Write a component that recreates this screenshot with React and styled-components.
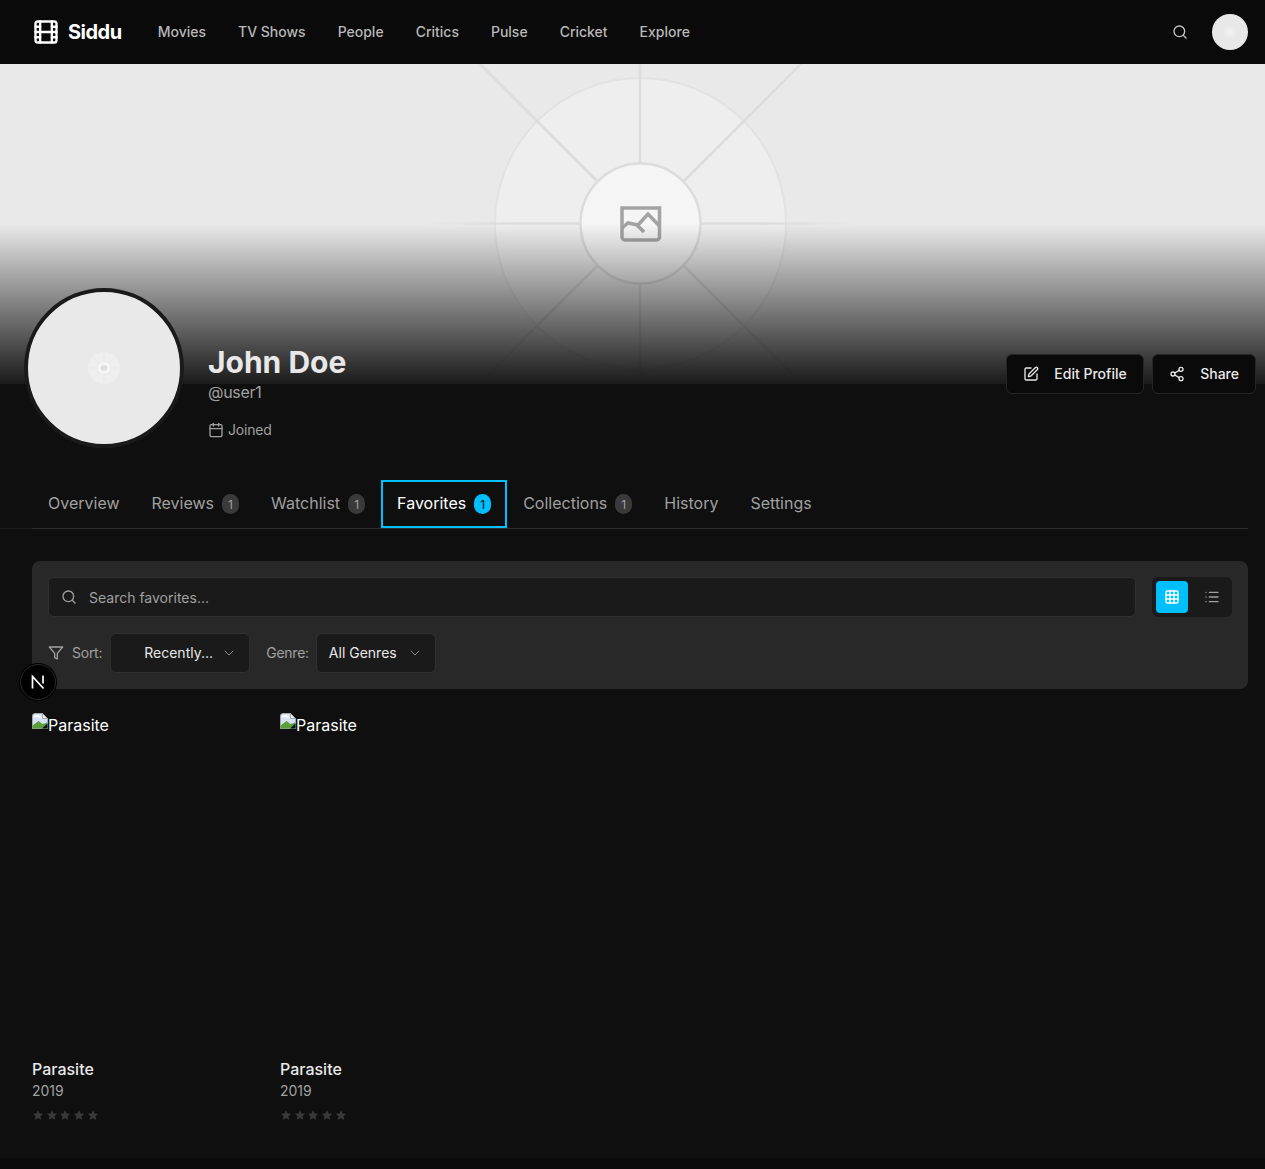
import React from 'react';
import styled, { createGlobalStyle } from 'styled-components';
import { Film, Search, SquarePen, Share2, Calendar, ChevronDown, Grid3x3, List } from 'lucide-react';

const GlobalStyle = createGlobalStyle`
  html, body {
    margin: 0;
    height: 1169px;
    overflow: hidden;
    background: #0f0f0f;
    color: #fff;
    font-family: Inter, "Liberation Sans", sans-serif;
  }
  * { box-sizing: border-box; }
`;

const Page = styled.div`
  min-height: 1169px;
  display: flex;
  flex-direction: column;
`;

const Nav = styled.nav`
  height: 64px;
  padding: 0 17px 0 32px;
  display: flex;
  align-items: center;
  background: #0a0a0a;
`;

const Logo = styled.div`
  display: flex;
  align-items: center;
  gap: 8px;
  margin-right: 36px;
  font-size: 20px;
  font-weight: 700;
  letter-spacing: -0.5px;
  color: #fff;
`;

const NavLinks = styled.div`
  display: flex;
  gap: 32px;
  flex: 1;
  margin-bottom: 2px;
`;

const NavLink = styled.a`
  font-size: 14px;
  font-weight: 500;
  color: #b8b8b8;
`;

const NavSearch = styled.div`
  display: flex;
  color: #c4c4c4;
  margin-right: 24px;
`;

const NavAvatar = styled.div`
  width: 36px;
  height: 36px;
  border-radius: 50%;
  background: radial-gradient(circle, #f2f2f2 0, #e8e8e8 30%);
`;

const Hero = styled.div`
  position: relative;
  height: 320px;
  background: #e9e9e9;
  overflow: hidden;
`;

const HeroArt = styled.svg`
  display: block;
  width: 1265px;
  height: 320px;
`;

const HeroFade = styled.div`
  position: absolute;
  inset: 0;
  background: linear-gradient(to top, rgba(15, 15, 15, 0.95) 0, rgba(15, 15, 15, 0) 50%);
`;

const ProfileHeader = styled.div`
  position: relative;
  margin-top: -96px;
  padding: 0 9px 0 24px;
  display: flex;
  align-items: flex-start;
`;

const AvatarRing = styled.div`
  width: 160px;
  height: 160px;
  border-radius: 50%;
  border: 4px solid #1a1a1a;
  background: #e9e9e9;
  overflow: hidden;
  flex: none;
`;

const AvatarArt = styled.svg`
  display: block;
  width: 152px;
  height: 152px;
`;

const ProfileInfo = styled.div`
  margin-left: 24px;
  padding-top: 56px;
  flex: 1;
`;

const Name = styled.h1`
  margin: 0;
  font-size: 30px;
  line-height: 36px;
  font-weight: 700;
  color: #e8e8e8;
`;

const Handle = styled.div`
  font-size: 16px;
  line-height: 24px;
  letter-spacing: -0.3px;
  color: #a0a0a0;
`;

const Joined = styled.div`
  margin-top: 16px;
  display: flex;
  align-items: center;
  gap: 4px;
  font-size: 14px;
  line-height: 20px;
  letter-spacing: -0.2px;
  color: #a0a0a0;
`;

const Actions = styled.div`
  display: flex;
  gap: 8px;
  padding-top: 66px;
`;

const ActionButton = styled.button`
  height: 40px;
  padding: 0 16px;
  display: flex;
  align-items: center;
  gap: 15.5px;
  font: 500 14px Inter, sans-serif;
  color: #e8e8e8;
  background: #0a0a0a;
  border: 1px solid #262626;
  border-radius: 6px;
`;

// the text sits a pixel above the icons next to it
const Lifted = styled.span`
  margin-bottom: 2px;
`;

const TabBar = styled.div`
  margin: 32px 17px 0 0;
  height: 49px;
  padding-left: 32px;
  border-bottom: 1px solid #1e1e1e;
`;

const TabList = styled.div`
  display: flex;
  height: 49px;
  border-bottom: 1px solid #2e2e2e;
`;

const Tab = styled.div`
  height: 48px;
  padding: 0 16px;
  display: flex;
  align-items: center;
  font-size: 16px;
  color: ${p => (p.$active ? '#fff' : '#a0a0a0')};
  outline: ${p => (p.$active ? '2px solid #00bfff' : 'none')};
  outline-offset: -2px;
`;

const Count = styled.span`
  margin-left: 8px;
  width: 17px;
  height: 20px;
  border-radius: 10px;
  display: flex;
  align-items: center;
  justify-content: center;
  font-size: 12px;
  color: ${p => (p.$active ? '#0a0a0a' : '#a0a0a0')};
  background: ${p => (p.$active ? '#00bfff' : '#3a3a3a')};
`;

const Content = styled.main`
  padding: 32px 17px 0 32px;
  flex: 1;
`;

const Panel = styled.div`
  padding: 16px;
  border-radius: 8px;
  background: #282828;
  display: flex;
  flex-direction: column;
  gap: 16px;
`;

const SearchRow = styled.div`
  display: flex;
  gap: 16px;
`;

const SearchBox = styled.div`
  flex: 1;
  height: 40px;
  padding: 0 12px;
  display: flex;
  align-items: center;
  gap: 12px;
  background: #1a1a1a;
  border: 1px solid #303030;
  border-radius: 6px;
  font-size: 14px;
  color: #a0a0a0;
`;

const ViewToggle = styled.div`
  width: 80px;
  height: 40px;
  padding: 4px;
  display: flex;
  gap: 8px;
  background: #1a1a1a;
  border-radius: 6px;
`;

const ViewButton = styled.div`
  width: 32px;
  height: 32px;
  display: flex;
  align-items: center;
  justify-content: center;
  border-radius: 4px;
  color: ${p => (p.$active ? '#fff' : '#a0a0a0')};
  background: ${p => (p.$active ? '#00bfff' : 'transparent')};
`;

const FilterRow = styled.div`
  display: flex;
  align-items: center;
  font-size: 14px;
  color: #a0a0a0;
`;

const FilterLabel = styled.span`
  margin: 0 ${p => p.$right}px 2px ${p => p.$left}px;
  letter-spacing: -0.25px;
`;

const FilterIcon = styled.svg`
  width: 16px;
  height: 16px;
  fill: none;
  stroke: #a0a0a0;
  stroke-width: 2;
  stroke-linecap: round;
  stroke-linejoin: round;
`;

const Select = styled.div`
  width: ${p => p.$width}px;
  height: 40px;
  padding: 0 12px 0 ${p => p.$indent}px;
  display: flex;
  align-items: center;
  justify-content: space-between;
  background: #1a1a1a;
  border: 1px solid #303030;
  border-radius: 6px;
  color: #e8e8e8;
  svg { color: #8a8a8a; flex: none; }
`;

const Cards = styled.div`
  margin-top: 24px;
  display: grid;
  grid-template-columns: repeat(5, 1fr);
  gap: 24px;
`;

const Poster = styled.div`
  height: 336px;
  display: flex;
  align-items: flex-start;
  font-size: 16px;
  line-height: 24px;
  color: #fff;
`;

const BrokenIcon = styled.svg`
  width: 16px;
  height: 16px;
  flex: none;
`;

const CardTitle = styled.div`
  margin-top: 8px;
  font-size: 16px;
  line-height: 24px;
  font-weight: 500;
  color: #e8e8e8;
`;

const CardYear = styled.div`
  font-size: 14px;
  line-height: 20px;
  color: #a0a0a0;
`;

const Stars = styled.div`
  margin-top: 4px;
  display: flex;
  gap: 1.67px;
  height: 20px;
  align-items: center;
`;

const Star = styled.svg`
  width: 12px;
  height: 12px;
  fill: #3a3a3a;
`;

const Footer = styled.footer`
  height: 11px;
  background: #0a0a0a;
  flex: none;
`;

const DevBadge = styled.div`
  position: fixed;
  left: 20px;
  top: 664px;
  width: 36px;
  height: 36px;
  border-radius: 50%;
  background: #000;
  border: 1px solid #2a2a2a;
  box-shadow: 0 0 0 1px #000;
  display: flex;
  align-items: center;
  justify-content: center;
`;

const tabs = [
  { label: 'Overview' },
  { label: 'Reviews', count: 1 },
  { label: 'Watchlist', count: 1 },
  { label: 'Favorites', count: 1, active: true },
  { label: 'Collections', count: 1 },
  { label: 'History' },
  { label: 'Settings' },
];

const navItems = ['Movies', 'TV Shows', 'People', 'Critics', 'Pulse', 'Cricket', 'Explore'];

const fadingRays = [
  [640, 220, 640, 326],
  [580, 159.5, 420, 159.5],
  [701, 159.5, 860, 159.5],
];

const diagonalRays = [
  [597, 117, 470, -10],
  [684, 117, 811, -10],
  [597, 202, 470, 329],
  [684, 202, 811, 329],
];

// the grey placeholder picture, used for the cover and again, small, for the avatar
const PlaceholderArt = () => (
  <>
    <defs>
      <radialGradient id="rayFade" gradientUnits="userSpaceOnUse" cx="640" cy="160" r="215">
        <stop offset="0.6" stopColor="#dcdcdc" />
        <stop offset="1" stopColor="#dcdcdc" stopOpacity="0" />
      </radialGradient>
      <radialGradient id="diagonalFade" gradientUnits="userSpaceOnUse" cx="640" cy="160" r="300">
        <stop offset="0.7" stopColor="#dcdcdc" />
        <stop offset="1" stopColor="#dcdcdc" stopOpacity="0" />
      </radialGradient>
    </defs>
    <circle cx="640.5" cy="159.5" r="145.5" fill="#eeeeee" stroke="#e2e2e2" strokeWidth="2" />
    <line x1="640" y1="99" x2="640" y2="-6" stroke="#dcdcdc" strokeWidth="2.5" />
    {fadingRays.map(r => (
      <line key={r.join()} x1={r[0]} y1={r[1]} x2={r[2]} y2={r[3]} stroke="url(#rayFade)" strokeWidth="2.5" />
    ))}
    {diagonalRays.map(r => (
      <line key={r.join()} x1={r[0]} y1={r[1]} x2={r[2]} y2={r[3]} stroke="url(#diagonalFade)" strokeWidth="2.5" />
    ))}
    <circle cx="640.5" cy="159.5" r="60" fill="#f5f5f5" stroke="#dcdcdc" strokeWidth="2.5" />
    <g fill="none" stroke="#a3a3a3" strokeWidth="3.5">
      <path d="M622 144h37.5v29a3 3 0 0 1-3 3h-31.5a3 3 0 0 1-3-3z" />
      <path d="M622 164l6-5 10 2 10-11 11.5 12" />
      <path d="M636 160l8 8" />
    </g>
  </>
);

const BrokenImage = () => (
  <BrokenIcon viewBox="0 0 16 16">
    <path d="M0.5 3a2.5 2.5 0 0 1 2.5-2.5h7.5l5 5V15.5H0.5z" fill="#d6e2f5" stroke="#a8a8a8" />
    <path d="M2 4c1.5-1.5 5-1.5 6.5.5" fill="none" stroke="#fff" strokeWidth="2" />
    <path d="M10.5 0.5v5h5z" fill="#f4f4f4" stroke="#a8a8a8" />
    <path d="M0.5 15.5v-3L6.5 8l4 3 5-1.5v6z" fill="#5aa03c" />
    <path d="M10 15.5l5.5-5v5z" fill="#0f0f0f" />
  </BrokenIcon>
);

const FavoriteCard = () => (
  <div>
    <Poster>
      <BrokenImage />
      Parasite
    </Poster>
    <CardTitle>Parasite</CardTitle>
    <CardYear>2019</CardYear>
    <Stars>
      {[0, 1, 2, 3, 4].map(i => (
        <Star key={i} viewBox="0 0 24 24">
          <path d="M12 2l3 7 7.5.7-5.7 5 1.7 7.3L12 18.2 5.500 22l1.700-7.300-5.700-5L9 9z" />
        </Star>
      ))}
    </Stars>
  </div>
);

const App = () => (
  <Page>
    <GlobalStyle />
    <Nav>
      <Logo>
        <Film size={28} strokeWidth={2} />
        Siddu
      </Logo>
      <NavLinks>
        {navItems.map(item => (
          <NavLink key={item}>{item}</NavLink>
        ))}
      </NavLinks>
      <NavSearch>
        <Search size={16} />
      </NavSearch>
      <NavAvatar />
    </Nav>

    <Hero>
      <HeroArt viewBox="0 0 1265 320">
        <PlaceholderArt />
      </HeroArt>
      <HeroFade />
    </Hero>

    <ProfileHeader>
      <AvatarRing>
        <AvatarArt viewBox="-26 -506 1333 1333">
          <PlaceholderArt />
        </AvatarArt>
      </AvatarRing>
      <ProfileInfo>
        <Name>John Doe</Name>
        <Handle>@user1</Handle>
        <Joined>
          <Calendar size={16} />
          Joined
        </Joined>
      </ProfileInfo>
      <Actions>
        <ActionButton>
          <SquarePen size={16} />
          <Lifted>Edit Profile</Lifted>
        </ActionButton>
        <ActionButton>
          <Share2 size={16} />
          <Lifted>Share</Lifted>
        </ActionButton>
      </Actions>
    </ProfileHeader>

    <TabBar>
      <TabList>
        {tabs.map(t => (
          <Tab key={t.label} $active={t.active}>
            <Lifted>{t.label}</Lifted>
            {t.count && <Count $active={t.active}>{t.count}</Count>}
          </Tab>
        ))}
      </TabList>
    </TabBar>

    <Content>
      <Panel>
        <SearchRow>
          <SearchBox>
            <Search size={16} />
            Search favorites...
          </SearchBox>
          <ViewToggle>
            <ViewButton $active>
              <Grid3x3 size={16} />
            </ViewButton>
            <ViewButton>
              <List size={16} />
            </ViewButton>
          </ViewToggle>
        </SearchRow>
        <FilterRow>
          <FilterIcon viewBox="0 0 24 24">
            <polygon points="22 3 2 3 10 12.46 10 19 14 21 14 12.46 22 3" />
          </FilterIcon>
          <FilterLabel $left={8} $right={8}>Sort:</FilterLabel>
          <Select $width={140} $indent={33}>
            <Lifted>Recently...</Lifted>
            <ChevronDown size={16} strokeWidth={1.5} />
          </Select>
          <FilterLabel $left={16} $right={7}>Genre:</FilterLabel>
          <Select $width={120} $indent={12}>
            <Lifted>All Genres</Lifted>
            <ChevronDown size={16} strokeWidth={1.5} />
          </Select>
        </FilterRow>
      </Panel>
      <Cards>
        <FavoriteCard />
        <FavoriteCard />
      </Cards>
    </Content>

    <Footer />

    <DevBadge>
      <svg width="16" height="16" viewBox="0 0 16 16" fill="none" stroke="#fff" strokeWidth="1.7">
        <path d="M2.5 14.500V2.500L13.500 14.500" />
        <path d="M13 1.500v8" />
      </svg>
    </DevBadge>
  </Page>
);

export default App;
